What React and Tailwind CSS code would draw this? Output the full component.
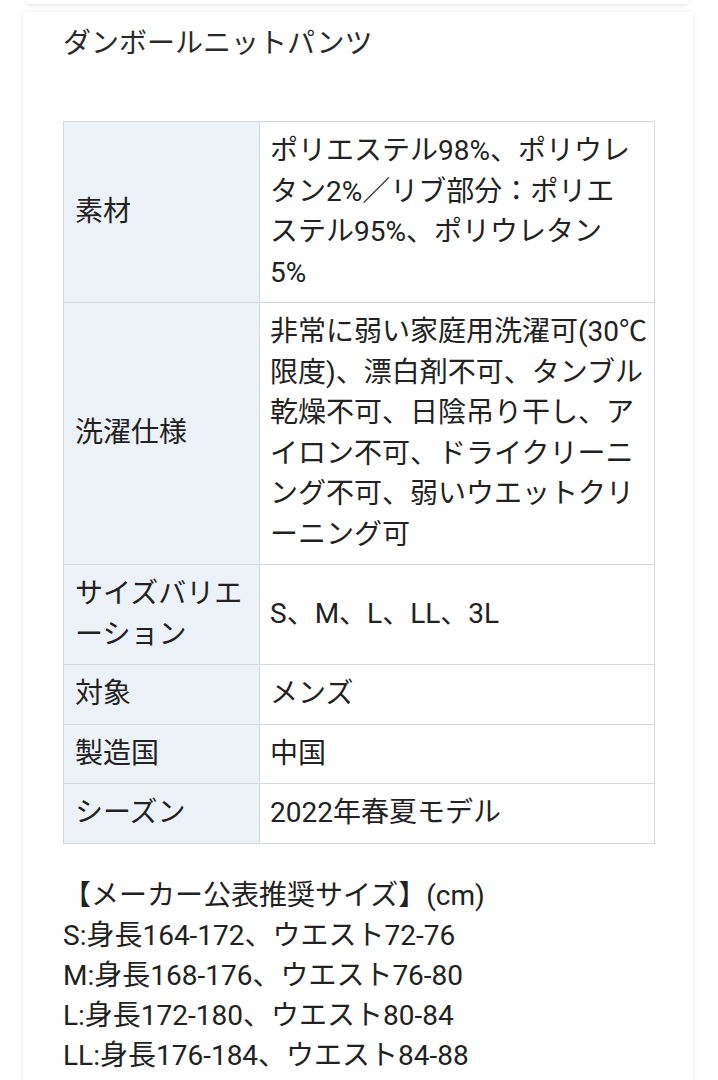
const ROWS = [
  {
    label: ["素材"],
    value: [
      "ポリエステル98%、ポリウレ",
      "タン2%／リブ部分：ポリエ",
      "ステル95%、ポリウレタン",
      "5%",
    ],
  },
  {
    label: ["洗濯仕様"],
    value: [
      "非常に弱い家庭用洗濯可(30℃",
      "限度)、漂白剤不可、タンブル",
      "乾燥不可、日陰吊り干し、ア",
      "イロン不可、ドライクリーニ",
      "ング不可、弱いウエットクリ",
      "ーニング可",
    ],
  },
  { label: ["サイズバリエ", "ーション"], value: ["S、M、L、LL、3L"] },
  { label: ["対象"], value: ["メンズ"] },
  { label: ["製造国"], value: ["中国"] },
  { label: ["シーズン"], value: ["2022年春夏モデル"] },
];

const SIZES = [
  "【メーカー公表推奨サイズ】(cm)",
  "S:身長164-172、ウエスト72-76",
  "M:身長168-176、ウエスト76-80",
  "L:身長172-180、ウエスト80-84",
  "LL:身長176-184、ウエスト84-88",
];

// spec sheet card: title, attribute table, recommended sizes
export default function App() {
  return (
    <div
      className="min-h-[1080px] w-[718px] bg-white text-[#222] text-[28px] leading-[40px] overflow-hidden"
      style={{ fontFamily: 'Roboto, "Noto Sans CJK JP", sans-serif' }}
    >
      {/* tail of the previous card */}
      <div className="ml-[26px] w-[662px] h-[4px] bg-white rounded-b-lg shadow-[0_1px_4px_rgba(0,0,0,0.12)]" />

      <div className="mt-[8px] ml-[23px] w-[670px] min-h-[1070px] bg-white pl-[40px] pt-[12px] shadow-[0_0_5px_rgba(0,0,0,0.09)]">
        <div className="text-[#2a2a2a] whitespace-nowrap">ダンボールニットパンツ</div>

        <table className="mt-[57px] w-[592px] table-fixed border-collapse leading-[40.5px]">
          <colgroup>
            <col className="w-[196px]" />
            <col />
          </colgroup>
          <tbody>
            {ROWS.map((r, i) => (
              <tr key={i}>
                <td className="border border-[#d5d8dc] bg-[#edf1f8] px-[11px] py-[9px] align-middle whitespace-nowrap">
                  {r.label.map((l, j) => (
                    <div key={j}>{l}</div>
                  ))}
                </td>
                <td className="border border-[#d5d8dc] bg-white px-[10px] py-[9px] align-middle whitespace-nowrap">
                  {r.value.map((l, j) => (
                    <div key={j}>{l}</div>
                  ))}
                </td>
              </tr>
            ))}
          </tbody>
        </table>

        <div className="mt-[32px] whitespace-nowrap">
          {SIZES.map((s, i) => (
            <div key={i}>{s}</div>
          ))}
        </div>
      </div>
    </div>
  );
}
